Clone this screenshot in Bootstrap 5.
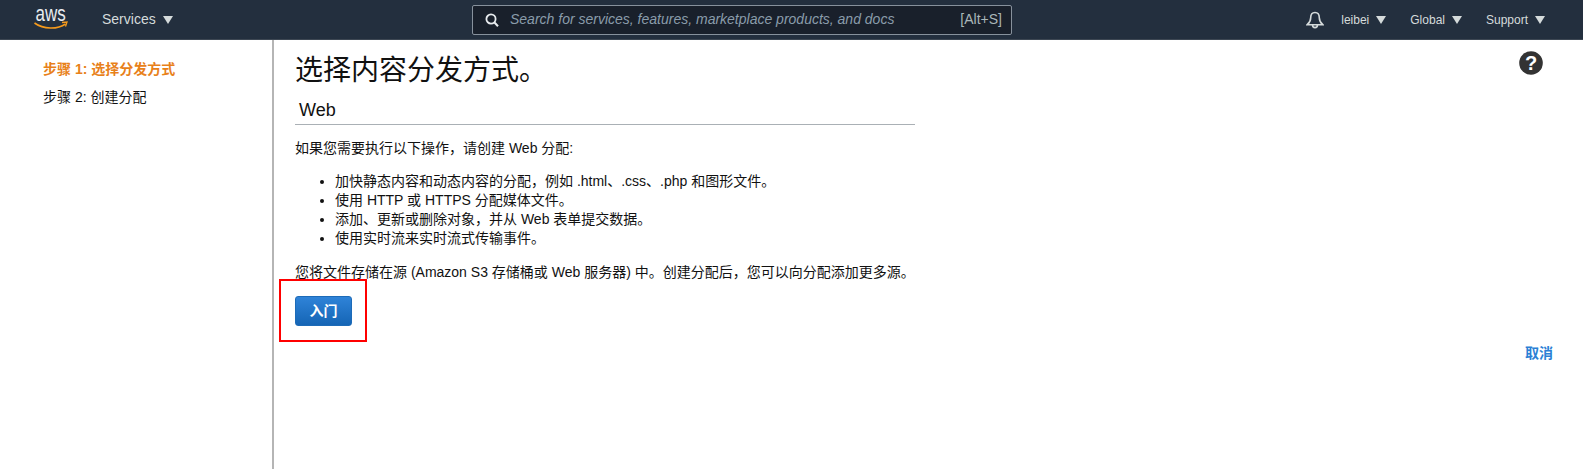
<!DOCTYPE html>
<html lang="zh-CN">
<head>
    <meta charset="UTF-8">
    <meta name="viewport" content="width=device-width, initial-scale=1.0">
    <title>选择内容分发方式</title>
    <link href="https://cdn.jsdelivr.net/npm/bootstrap@5.3.0/dist/css/bootstrap.min.css" rel="stylesheet">
    <style>
        html, body { height: 100%; }
        body { font-family: "Liberation Sans", "Noto Sans CJK SC", sans-serif; font-size: 14px; color: #111; overflow: hidden; }
        .top-bar { height: 40px; background: #232f3e; border-bottom: 1px solid #3d4753; color: #d5dbdb; padding: 0; }
        .aws-logo { margin-left: 34px; width: 36px; height: 39px; }
        .top-item { font-size: 12px; line-height: 1; white-space: nowrap; }
        .services-item { font-size: 14px; margin-left: 32px; width: 370px; }
        .caret-down { display: inline-block; width: 0; height: 0; border-left: 5px solid transparent; border-right: 5px solid transparent; border-top: 8px solid #d5dbdb; margin-left: 7px; vertical-align: 0; }
        .search-box { width: 540px; height: 30px; background: #19202b; border: 1px solid #87919c; border-radius: 2px; padding: 0 9px 0 11px; }
        .search-text { font-size: 14px; font-style: italic; color: #8a9caa; margin-left: 10px; }
        .search-key { font-size: 14px; color: #aab7b8; }
        .top-right { margin-left: auto; padding-right: 38px; gap: 24px; }
        .bell-icon { margin-right: -7px; margin-left: -1px; }
        .page-body { height: 429px; }
        .side-col { width: 274px; flex: none; border-right: 2px solid #b5b5b5; padding: 21px 0 0 43px; }
        .side-step { line-height: 16px; margin-bottom: 12px; }
        .side-step.is-active { color: #e8811a; font-weight: 700; }
        .main-col { flex: 1; padding: 0 0 0 21px; }
        .main-inner { width: 620px; white-space: nowrap; }
        .page-title { font-size: 28px; font-weight: 400; line-height: 32px; margin: 15px 0 0; color: #111; }
        .web-title { font-size: 18px; line-height: 24px; padding: 11px 0 2px 4px; border-bottom: 1px solid #aab0b5; margin: 0 0 15px; font-weight: 400; }
        .body-text { line-height: 17px; margin: 0; }
        .intro-list { margin: 15px 0 16px; padding-left: 40px; line-height: 19px; }
        .cta-box { width: 88px; height: 63px; border: 2px solid #f00; margin: -2px 0 0 -16px; padding-left: 1px; }
        .cta-btn { width: 57px; height: 30px; font-size: 14px; font-weight: 700; line-height: 1; color: #fff; padding: 0; border: 1px solid #1d6bb8; border-radius: 3px; background: linear-gradient(#2f83d8, #1565b5); }
        .cta-btn:hover { color: #fff; }
        .help-col { width: 64px; flex: none; margin-left: auto; padding: 11px 0 0; position: relative; }
        .help-icon { display: block; }
        .cancel-link { font-size: 14px; font-weight: 700; color: #2a7fd5; text-decoration: none; position: absolute; top: 303px; left: 6px; }
    </style>
</head>
<body>
<nav class="navbar top-bar d-flex flex-nowrap align-items-center justify-content-start">
    <svg class="aws-logo" viewBox="0 0 36 39">
        <text transform="translate(1.500 21) scale(1 1.300)" font-family="Liberation Sans" font-size="17" fill="#e8ecef">aws</text>
        <path d="M0.500 23c9 6.500 23 6.500 31 1" fill="none" stroke="#f59a1c" stroke-width="1.600"/>
        <path d="M28 22.500l5-.5-1.500 4.500" fill="none" stroke="#f59a1c" stroke-width="1.300"/>
    </svg>
    <div class="services-item">Services<span class="caret-down"></span></div>
    <div class="search-box d-flex align-items-center">
        <svg width="16" height="16" viewBox="0 0 16 16"><circle cx="7" cy="7" r="4.600" fill="none" stroke="#e8ecef" stroke-width="1.800"/><path d="M10.500 10.500l3.500 3.800" stroke="#e8ecef" stroke-width="2"/></svg>
        <span class="search-text flex-grow-1">Search for services, features, marketplace products, and docs</span>
        <span class="search-key">[Alt+S]</span>
    </div>
    <div class="top-right d-flex align-items-center">
        <svg class="bell-icon" width="18" height="18" viewBox="0 0 18 18"><path d="M9 1.500c-3 0-4.300 2.500-4.300 5.200 0 3-1.200 5-3.500 7h15.600c-2.300-2-3.500-4-3.500-7 0-2.700-1.300-5.200-4.300-5.200zM6.500 14c0 3.500 5 3.500 5 0" fill="none" stroke="#d5dbdb" stroke-width="1.600"/></svg>
        <div class="top-item">leibei<span class="caret-down"></span></div>
        <div class="top-item">Global<span class="caret-down"></span></div>
        <div class="top-item">Support<span class="caret-down"></span></div>
    </div>
</nav>
<div class="page-body d-flex">
    <div class="side-col">
        <div class="side-step is-active">步骤 1: 选择分发方式</div>
        <div class="side-step">步骤 2: 创建分配</div>
    </div>
    <div class="main-col d-flex">
        <div class="main-inner">
            <h1 class="page-title">选择内容分发方式。</h1>
            <h2 class="web-title">Web</h2>
            <p class="body-text">如果您需要执行以下操作，请创建 Web 分配:</p>
            <ul class="intro-list">
                <li>加快静态内容和动态内容的分配，例如 .html、.css、.php 和图形文件。</li>
                <li>使用 HTTP 或 HTTPS 分配媒体文件。</li>
                <li>添加、更新或删除对象，并从 Web 表单提交数据。</li>
                <li>使用实时流来实时流式传输事件。</li>
            </ul>
            <p class="body-text">您将文件存储在源 (Amazon S3 存储桶或 Web 服务器) 中。创建分配后，您可以向分配添加更多源。</p>
            <div class="cta-box d-flex align-items-center justify-content-center">
                <button type="button" class="btn cta-btn">入门</button>
            </div>
        </div>
        <div class="help-col">
            <svg class="help-icon" width="24" height="24" viewBox="0 0 24 24"><circle cx="12" cy="12" r="11.800" fill="#333"/><text x="12" y="19" text-anchor="middle" font-family="Liberation Sans" font-size="20" font-weight="700" fill="#fff">?</text></svg>
            <a href="#" class="cancel-link">取消</a>
        </div>
    </div>
</div>
<script src="https://cdn.jsdelivr.net/npm/bootstrap@5.3.0/dist/js/bootstrap.bundle.min.js"></script>
</body>
</html>
